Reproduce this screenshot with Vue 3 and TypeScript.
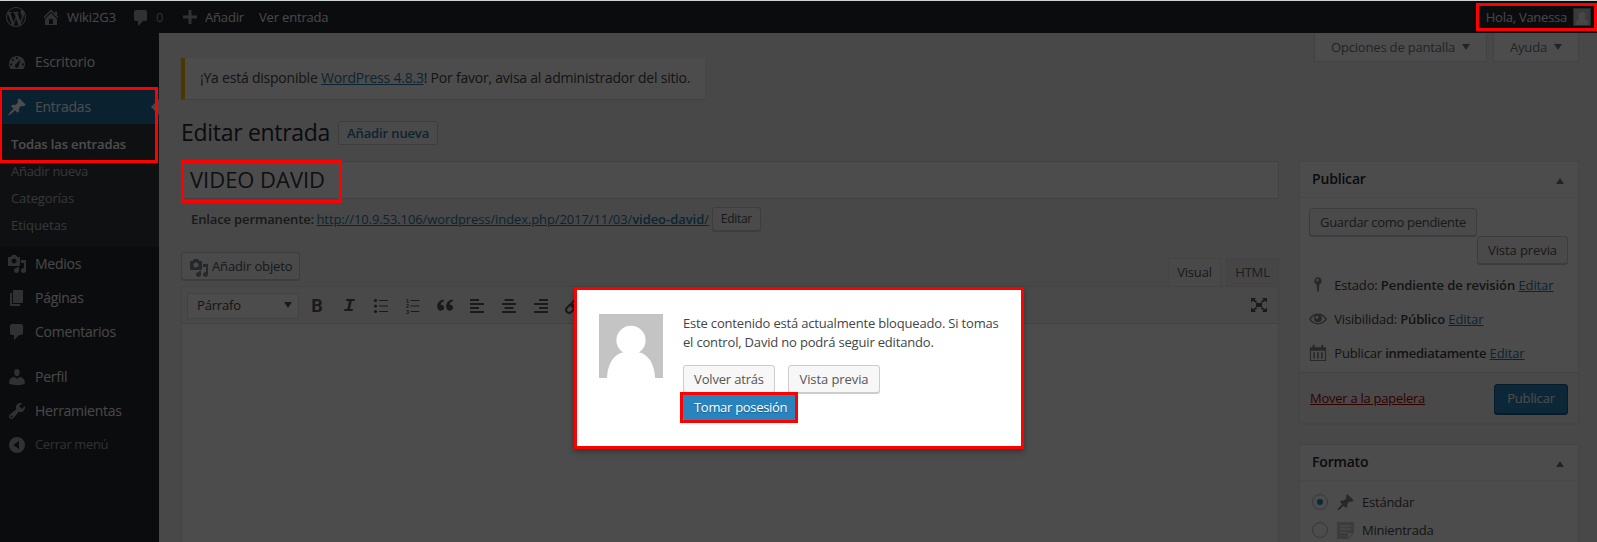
<script setup lang="ts">
interface MenuEntry {
  label: string
  icon: string
  cls?: string
}

const icons: Record<string, string> = {
  wordpress:
    'M20 10c0-5.51-4.49-10-10-10C4.48 0 0 4.49 0 10c0 5.52 4.48 10 10 10 5.51 0 10-4.48 10-10zM7.78 15.37L4.37 6.22c.55-.02 1.17-.08 1.17-.08.5-.06.44-1.13-.06-1.11 0 0-1.45.11-2.37.11-.18 0-.37 0-.58-.01C4.12 2.69 6.87 1.11 10 1.11c2.33 0 4.45.87 6.05 2.34-.68-.11-1.65.39-1.65 1.58 0 .74.45 1.36.9 2.1.35.61.55 1.36.55 2.46 0 1.49-1.4 5-1.4 5l-3.03-8.37c.54-.02.82-.17.82-.17.5-.05.44-1.25-.06-1.22 0 0-1.44.12-2.38.12-.87 0-2.33-.12-2.33-.12-.5-.03-.56 1.2-.06 1.22l.92.08 1.26 3.41zM17.41 10c.24-.64.74-1.87.43-4.25.7 1.29 1.05 2.71 1.05 4.25 0 3.29-1.73 6.24-4.4 7.78.97-2.59 1.94-5.2 2.92-7.78zM6.1 18.09C3.12 16.65 1.11 13.53 1.11 10c0-1.3.23-2.48.72-3.59C3.25 10.3 4.67 14.2 6.1 18.09zm4.03-6.63l2.58 6.98c-.86.29-1.76.45-2.71.45-.79 0-1.57-.11-2.29-.33.81-2.38 1.62-4.74 2.42-7.1z',
  home: 'M16 8.5l1.53 1.53-1.06 1.06L10 4.6l-6.47 6.49-1.06-1.06L10 2.5l4 4v-2h2v4zm-6-2.46l6 5.99V18H4v-5.97zM12 17v-5H8v5h4z',
  comment: 'M5 2h9c1.1 0 2 .9 2 2v7c0 1.1-.9 2-2 2h-2l-5 5v-5H5c-1.1 0-2-.9-2-2V4c0-1.1.9-2 2-2z',
  plus: 'M17 8.5v3h-5.5V17h-3v-5.5H3v-3h5.5V3h3v5.5z',
  dashboard:
    'M3.76 17h12.48C17.34 15.63 18 13.89 18 12c0-4.41-3.58-8-8-8s-8 3.59-8 8c0 1.89.66 3.63 1.76 5zM8.9 6.2a1.1 1.1 0 1 0 2.2 0 1.1 1.1 0 1 0-2.2 0zM4.8 8a1.1 1.1 0 1 0 2.2 0 1.1 1.1 0 1 0-2.2 0zM3 12.4a1.1 1.1 0 1 0 2.2 0 1.1 1.1 0 1 0-2.2 0zM14.8 12.4a1.1 1.1 0 1 0 2.2 0 1.1 1.1 0 1 0-2.2 0zM13.6 7.6l-1.9 6.3a1.9 1.9 0 1 1-3-1.6z',
  pin: 'M10.44 3.02l1.82-1.82 6.36 6.35-1.83 1.82c-1.05-.68-2.48-.57-3.41.36l-.75.75c-.92.93-1.04 2.35-.35 3.41l-1.83 1.82-2.41-2.41-2.8 2.79c-.42.42-3.38 2.71-3.8 2.29s1.86-3.39 2.28-3.81l2.79-2.79L4.1 9.36l1.83-1.82c1.05.69 2.48.57 3.4-.36l.75-.75c.93-.92 1.05-2.35.36-3.41z',
  media:
    'M13 11V4c0-.55-.45-1-1-1h-1.67L9 1H5L3.67 3H2c-.55 0-1 .45-1 1v7c0 .55.45 1 1 1h10c.55 0 1-.45 1-1zM7 4.5c1.38 0 2.5 1.12 2.5 2.5S8.38 9.5 7 9.5 4.5 8.38 4.5 7 5.62 4.5 7 4.5zM14 6h5v10.5c0 1.38-1.12 2.5-2.5 2.5S14 17.88 14 16.5s1.12-2.5 2.5-2.5c.17 0 .34.02.5.05V9h-3V6zm-4 8.05V13h2v3.5c0 1.38-1.12 2.5-2.5 2.5S7 17.88 7 16.5 8.12 14 9.5 14c.17 0 .34.02.5.05z',
  page: 'M6 15V2h10v13H6zm-1 1h8v2H3V5h2v11z',
  user: 'M10 9.25c-2.27 0-2.73-3.44-2.73-3.44C7 4.02 7.82 2 9.97 2c2.16 0 2.98 2.02 2.71 3.81 0 0-.41 3.44-2.68 3.44zm0 2.57L12.72 10c2.39 0 5.02 2.33 5.02 4.53v2.49s-4.15 1.13-7.74 1.13c-3.65 0-7.74-1.13-7.74-1.13v-2.49c0-2.25 2.44-4.48 4.97-4.48z',
  tools:
    'M16.68 9.77c-1.34 1.34-3.3 1.67-4.95.99l-5.41 6.52c-.99.99-2.59.99-3.58 0s-.99-2.59 0-3.57l6.52-5.42c-.68-1.65-.35-3.61.99-4.95 1.28-1.28 3.12-1.62 4.72-1.06l-2.89 2.89 2.82 2.82 2.86-2.87c.53 1.58.18 3.39-1.08 4.65zM3.81 16.21c.4.39 1.04.39 1.43 0 .4-.4.4-1.04 0-1.43-.39-.4-1.03-.4-1.43 0-.39.39-.39 1.03 0 1.43z',
  collapse: 'M10 2a8 8 0 1 0 0 16 8 8 0 0 0 0-16zM12 5.8v8.4L6.4 10z',
  marker:
    'M10 1.5a4 4 0 0 0-1.6 7.7l.8 8.3h1.6l.8-8.3A4 4 0 0 0 10 1.5zM9.3 3a1.4 1.4 0 1 1 0 2.8 1.4 1.4 0 0 1 0-2.8z',
  eye: 'M19.7 9.4C17.7 6 14 3.9 10 3.9S2.3 6 .3 9.4L0 10l.3.6c2 3.4 5.7 5.5 9.7 5.5s7.7-2.1 9.7-5.5l.3-.6zM10 14.6c-3.200 0-6.300-1.700-8-4.600C3.100 8.100 4.800 6.700 6.800 6 6 6.800 5.600 7.900 5.600 9.100a4.400 4.400 0 0 0 8.800 0c0-1.200-.4-2.300-1.200-3.100 2 .7 3.700 2.100 4.800 4-1.700 2.900-4.800 4.600-8 4.600zM8.900 6.300a1.700 1.700 0 1 1 0 3.400 1.700 1.700 0 0 1 0-3.400z',
  calendar:
    'M1 3.500h3V2a1.100 1.100 0 0 1 2.400 0v1.500h7.200V2a1.100 1.100 0 0 1 2.400 0v1.500h3V19H1zM2.300 7.500v10.200h15.400V7.500zM4.800 9.200h1.900v7H4.800zM9 9.200h1.900v7H9zM13.300 9.200h1.900v7h-1.900z',
  aside: 'M1 1h18v12l-6 6H1zM4 4.500v1.200h12V4.500zM4 8v1.200h12V8zM4 11.500v1.200h7v-1.200zM12.500 13v5l5-5z',
  quote:
    'M9 5.200c-2.400.6-3.300 2-3.300 3.500 1.800-.2 3.400.9 3.400 2.900 0 1.700-1.300 3.100-3.200 3.100-2.300 0-3.700-1.700-3.700-4.200C2.200 6.800 4.700 4 8.600 3.600zM18 5.200c-2.400.6-3.300 2-3.300 3.500 1.800-.2 3.400.9 3.400 2.900 0 1.700-1.300 3.100-3.200 3.100-2.300 0-3.700-1.700-3.700-4.200 0-3.700 2.500-6.500 6.400-6.900z',
  alignLeft: 'M3 3h9v2H3zM3 7h14v2H3zM3 11h9v2H3zM3 15h14v2H3z',
  alignCenter: 'M5.500 3h9v2h-9zM3 7h14v2H3zM5.500 11h9v2h-9zM3 15h14v2H3z',
  alignRight: 'M8 3h9v2H8zM3 7h14v2H3zM8 11h9v2H8zM3 15h14v2H3z',
  expand:
    'M2 3h5L5.500 4.400l2.700 2.300-1.300 1.400-2.800-2.400L2 7.500zM18 3h-5l1.500 1.400-2.700 2.300 1.300 1.400 2.800-2.400L18 7.500zM2 17h5l-1.500-1.400 2.700-2.300-1.300-1.400-2.800 2.400L2 12.500zM18 17h-5l1.500-1.400-2.700-2.300 1.300-1.400 2.800 2.400L18 12.500zM7 8h6v4H7z'
}

const submenu: MenuEntry[] = [
  { label: 'Todas las entradas', icon: '', cls: 'current' },
  { label: 'Añadir nueva', icon: '', cls: 'tight' },
  { label: 'Categorías', icon: '' },
  { label: 'Etiquetas', icon: '', cls: 'loose' }
]
const contentMenu: MenuEntry[] = [
  { label: 'Medios', icon: 'media' },
  { label: 'Páginas', icon: 'page' },
  { label: 'Comentarios', icon: 'comment' }
]
const userMenu: MenuEntry[] = [
  { label: 'Perfil', icon: 'user' },
  { label: 'Herramientas', icon: 'tools' },
  { label: 'Cerrar menú', icon: 'collapse', cls: 'collapse' }
]
const publishRows = [
  { icon: 'marker', label: 'Estado:', value: 'Pendiente de revisión', cls: 'state' },
  { icon: 'eye', label: 'Visibilidad:', value: 'Público', cls: 'visibility' },
  { icon: 'calendar', label: 'Publicar', value: 'inmediatamente', cls: 'date' }
]
</script>

<template>
  <div class="screen">
    <header class="adminbar">
      <svg class="ico wp" viewBox="0 0 20 20"><path :d="icons.wordpress" /></svg>
      <svg class="ico home" viewBox="0 0 20 20"><path fill-rule="evenodd" :d="icons.home" /></svg>
      <span class="site">Wiki2G3</span>
      <svg class="ico bubble" viewBox="0 0 20 20"><path :d="icons.comment" /></svg>
      <span class="count">0</span>
      <svg class="ico add" viewBox="0 0 20 20"><path :d="icons.plus" /></svg>
      <span class="new">Añadir</span>
      <span class="view">Ver entrada</span>
      <span class="hello">Hola, Vanessa</span>
      <svg class="me" viewBox="0 0 64 64">
        <rect width="64" height="64" fill="#c4c4c4" />
        <circle cx="32" cy="26" r="14" /><path d="M8 64c0-16 9-27 24-27s24 11 24 27z" />
      </svg>
    </header>

    <div class="body">
      <nav class="sidebar">
        <div class="item"><svg class="ico" viewBox="0 0 20 20"><path fill-rule="evenodd" :d="icons.dashboard" /></svg><span class="dash">Escritorio</span></div>
        <div class="item active gap"><svg class="ico" viewBox="0 0 20 20"><path :d="icons.pin" /></svg><span>Entradas</span></div>
        <div class="submenu">
          <span v-for="s in submenu" :key="s.label" :class="s.cls">{{ s.label }}</span>
        </div>
        <div v-for="m in contentMenu" :key="m.label" class="item">
          <svg class="ico" viewBox="0 0 20 20"><path fill-rule="evenodd" :d="icons[m.icon]" /></svg><span>{{ m.label }}</span>
        </div>
        <div class="gap">
          <div v-for="m in userMenu" :key="m.label" class="item" :class="m.cls">
            <svg class="ico" viewBox="0 0 20 20"><path fill-rule="evenodd" :d="icons[m.icon]" /></svg><span>{{ m.label }}</span>
          </div>
        </div>
      </nav>

      <main class="content">
        <div class="top">
          <div class="intro">
            <p class="notice">¡Ya está disponible <a>WordPress 4.8.3</a>! Por favor, avisa al administrador del sitio.</p>
            <div class="heading"><h1>Editar entrada</h1><a class="page-action">Añadir nueva</a></div>
          </div>
          <div class="meta-tabs">
            <span class="opts">Opciones de pantalla<i class="down" /></span>
            <span class="help">Ayuda<i class="down" /></span>
          </div>
        </div>

        <div class="columns">
          <section class="editor">
            <div class="title">VIDEO DAVID</div>
            <div class="permalink">
              <b>Enlace permanente:</b>
              <a><span>http://10.9.53.106/wordpress/index.php/2017/11/03/</span><b>video-david</b>/</a>
              <button class="btn small">Editar</button>
            </div>
            <div class="media-row">
              <button class="btn media"><svg class="ico" viewBox="0 0 20 20"><path fill-rule="evenodd" :d="icons.media" /></svg>Añadir objeto</button>
              <div class="tabs"><span class="tab on">Visual</span><span class="tab">HTML</span></div>
            </div>
            <div class="frame">
              <div class="toolbar">
                <div class="select">Párrafo<i class="down" /></div>
                <span class="tool bold">B</span>
                <span class="tool italic">I</span>
                <svg class="tool" viewBox="0 0 20 20">
                  <circle cx="4.500" cy="4.500" r="1.600" /><circle cx="4.500" cy="10" r="1.600" /><circle cx="4.500" cy="15.500" r="1.600" />
                  <path d="M8 4h9v1H8zM8 9.500h9v1H8zM8 15h9v1H8z" />
                </svg>
                <svg class="tool" viewBox="0 0 20 20">
                  <path d="M7.500 4h9v1h-9zM7.500 9.500h9v1h-9zM7.500 15h9v1h-9z" />
                  <text x="4.500" y="6.700" class="num">1</text><text x="4.500" y="12.200" class="num">2</text><text x="4.500" y="17.700" class="num">3</text>
                </svg>
                <svg class="tool" viewBox="0 0 20 20"><path :d="icons.quote" /></svg>
                <svg class="tool" viewBox="0 0 20 20"><path :d="icons.alignLeft" /></svg>
                <svg class="tool" viewBox="0 0 20 20"><path :d="icons.alignCenter" /></svg>
                <svg class="tool" viewBox="0 0 20 20"><path :d="icons.alignRight" /></svg>
                <svg class="tool link" viewBox="0 0 20 20">
                  <g transform="rotate(-45 10 10)"><rect x="1.500" y="7" width="9.500" height="6" rx="3" /><rect x="9" y="7" width="9.500" height="6" rx="3" /></g>
                </svg>
                <svg class="tool full" viewBox="0 0 20 20"><path :d="icons.expand" /></svg>
              </div>
              <div class="canvas" />
            </div>
          </section>

          <aside class="side">
            <section class="box">
              <h2>Publicar<i class="up" /></h2>
              <div class="publish">
                <button class="btn save">Guardar como pendiente</button>
                <button class="btn preview">Vista previa</button>
                <div v-for="r in publishRows" :key="r.label" class="row" :class="r.cls">
                  <svg class="ico" viewBox="0 0 20 20"><path fill-rule="evenodd" :d="icons[r.icon]" /></svg>
                  <span>{{ r.label }}</span><b>{{ r.value }}</b><a>Editar</a>
                </div>
              </div>
              <div class="actions"><a class="trash">Mover a la papelera</a><button class="btn primary">Publicar</button></div>
            </section>
            <section class="box format">
              <h2>Formato<i class="up" /></h2>
              <label class="choice"><i class="radio checked" /><svg class="ico" viewBox="0 0 20 20"><path :d="icons.pin" /></svg>Estándar</label>
              <label class="choice pale"><i class="radio" /><svg class="ico" viewBox="0 0 20 20"><path fill-rule="evenodd" :d="icons.aside" /></svg>Minientrada</label>
            </section>
          </aside>
        </div>
      </main>
    </div>

    <div class="shade" />

    <div class="dialog">
      <svg class="avatar" viewBox="0 0 64 64">
        <rect width="64" height="64" fill="#c4c4c4" />
        <circle cx="32" cy="26.300" r="14.600" /><path d="M8 64c.5-15 8-25.500 18.500-26h11C48 38.500 55.500 49 56 64z" />
      </svg>
      <div class="message">
        <p>Este contenido está actualmente bloqueado. Si tomas<br />el control, David no podrá seguir editando.</p>
        <div class="choices">
          <button class="btn back">Volver atrás</button>
          <button class="btn look">Vista previa</button>
          <button class="btn take">Tomar posesión</button>
        </div>
      </div>
    </div>

    <div class="mark mark-user" />
    <div class="mark mark-menu" />
    <div class="mark mark-title" />
    <div class="mark mark-take" />
  </div>
</template>

<style>
body {
  margin: 0;
  overflow: hidden;
}
</style>

<style scoped>
.screen {
  position: relative;
  box-sizing: border-box;
  width: 1597px;
  height: 542px;
  padding-top: 1px;
  overflow: hidden;
  background: #ccd3d3;
  color: #444;
  font: 13px/19px 'Open Sans', sans-serif;
  letter-spacing: -0.18px;
}
.screen *,
.screen *::before {
  box-sizing: border-box;
}
svg {
  display: block;
  flex: none;
  fill: currentColor;
}
.ico {
  width: 20px;
  height: 20px;
}
a {
  color: #2a79a8;
  text-decoration: underline;
}
b {
  font-weight: 600;
}
.adminbar {
  display: flex;
  align-items: center;
  height: 32px;
  padding-left: 6px;
  background: #23282d;
  color: #eee;
}
.adminbar .ico {
  color: #a0a5aa;
}
.home { margin: 0 6px 0 15px; }
.site { width: 66px; letter-spacing: -0.1px; }
.bubble { margin: 2px 5px 0 -2px; }
.count { width: 24px; color: #a0a5aa; }
.add { margin-right: 5px; }
.new { width: 54px; }
.hello { margin-left: auto; letter-spacing: -0.25px; }
.me {
  width: 18px;
  height: 18px;
  margin: 0 6px;
  border: 1px solid #82878c;
  fill: #eee;
}

.body {
  display: flex;
  height: 509px;
}
.sidebar {
  width: 159px;
  padding-top: 12px;
  background: #23282d;
  color: #eee;
  font-size: 14px;
  letter-spacing: -0.26px;
}
.item {
  display: flex;
  align-items: center;
  height: 34px;
  padding-left: 7px;
}
.item span { padding-bottom: 2px; }
.item .ico {
  margin-right: 8px;
  color: #a0a5aa;
}
.item .dash { letter-spacing: -0.15px; }
.gap { margin-top: 11px; }
.active {
  background: #246fa2;
  color: #fff;
}
.active .ico { color: #fff; }
.active::after {
  margin-left: auto;
  border: 8px solid transparent;
  border-right-color: #f1f1f1;
  border-left: 0;
  content: '';
}
.submenu {
  display: flex;
  flex-direction: column;
  height: 123px;
  padding: 7px 0 0 11px;
  background: #32373c;
  color: #b4b9be;
  font-size: 13px;
  line-height: 27px;
  letter-spacing: -0.12px;
}
.submenu .current { color: #fff; font-weight: 600; letter-spacing: -0.14px; }
.submenu .tight { letter-spacing: -0.28px; }
.submenu .loose { letter-spacing: -0.05px; }
.collapse { color: #a0a5aa; font-size: 13px; letter-spacing: -0.38px; }

.content {
  flex: 1;
  padding-left: 22px;
  background: #f1f1f1;
}
.top {
  display: flex;
  justify-content: space-between;
  height: 128px;
  padding-right: 18px;
}
.intro { padding-top: 25px; }
.notice {
  width: 524px;
  height: 41px;
  margin: 0;
  padding-left: 15px;
  border-left: 4px solid #ffb900;
  background: #fff;
  box-shadow: 0 1px 1px rgba(0, 0, 0, 0.1);
  font-size: 14px;
  line-height: 40px;
  letter-spacing: -0.22px;
  white-space: nowrap;
}
.heading {
  display: flex;
  align-items: center;
  gap: 8px;
  height: 67px;
}
h1 {
  margin: 0;
  color: #23282d;
  font-size: 23px;
  font-weight: 400;
  letter-spacing: -0.3px;
}
.page-action {
  height: 24px;
  padding: 0 8px;
  border: 1px solid #ccc;
  border-radius: 2px;
  background: #f7f7f7;
  font-weight: 600;
  line-height: 22px;
  letter-spacing: -0.13px;
  text-decoration: none;
}
.meta-tabs {
  display: flex;
  align-items: flex-start;
  gap: 6px;
  color: #72777c;
  line-height: 28px;
}
.meta-tabs > span {
  display: flex;
  align-items: center;
  height: 29px;
  padding-left: 16px;
  border: 1px solid #ddd;
  border-top: 0;
  background: #fff;
}
.meta-tabs .opts { width: 173px; }
.meta-tabs .help { width: 86px; }
.down {
  margin: -1px 0 0 7px;
  border: 4px solid transparent;
  border-top: 6px solid #72777c;
  border-bottom: 0;
}
.columns {
  display: grid;
  grid-template-columns: 1098px 280px;
  gap: 20px;
}
.title {
  height: 38px;
  padding-left: 8px;
  border: 1px solid #ddd;
  background: #fff;
  color: #32373c;
  font-size: 22px;
  line-height: 35px;
  letter-spacing: -0.03px;
}
.permalink {
  display: flex;
  align-items: center;
  height: 42px;
  padding: 0 0 2px 10px;
}
.permalink > b { width: 125px; color: #555; letter-spacing: -0.13px; white-space: nowrap; }
.permalink a { margin-left: 0.5px; letter-spacing: -0.1px; }
.permalink a b { letter-spacing: -0.05px; }
.btn {
  height: 28px;
  padding: 1px 10px 0;
  border: 1px solid #ccc;
  border-radius: 3px;
  background: #f7f7f7;
  box-shadow: 0 1px 0 #ccc;
  color: #555;
  font: inherit;
  letter-spacing: inherit;
  white-space: nowrap;
}
.small {
  height: 24px;
  margin-left: 3px;
  padding: 0 8px;
  font-size: 12px;
  line-height: 22px;
  letter-spacing: -0.3px;
}
.media-row {
  display: flex;
  align-items: flex-start;
  justify-content: space-between;
  height: 45px;
  padding-top: 11px;
}
.media {
  display: flex;
  align-items: center;
  width: 119px;
  padding: 0 0 0 7px;
  letter-spacing: -0.13px;
}
.media .ico { margin: 3px 3px 0 0; color: #82878c; }
.tabs {
  display: flex;
  gap: 5px;
  padding-top: 6px;
}
.tab {
  width: 53px;
  height: 28px;
  border: 1px solid #e5e5e5;
  border-bottom: 0;
  background: #ebebeb;
  color: #666;
  line-height: 27px;
  text-align: center;
}
.tab.on {
  background: #f5f5f5;
  color: #555;
}
.frame {
  height: 270px;
  border: 1px solid #e5e5e5;
}
.toolbar {
  display: flex;
  align-items: center;
  height: 37px;
  padding-left: 5px;
  border-bottom: 1px solid #ddd;
  background: #f5f5f5;
  color: #50575e;
}
.select {
  display: flex;
  align-items: center;
  justify-content: space-between;
  width: 112px;
  height: 26px;
  margin: 1px 2px 0 0;
  padding: 0 6px 1px 9px;
  border: 1px solid #ddd;
  background: #fff;
  color: #444;
}
.select .down { border-top-color: #50575e; }
.tool {
  width: 20px;
  height: 20px;
  margin: 1px 6px 0;
}
.bold {
  font: 700 18px/20px Roboto, sans-serif;
  text-align: center;
}
.italic {
  font: italic 700 19px/20px 'Liberation Mono', monospace;
  text-align: center;
}
.num {
  font: 700 5.500px 'Liberation Sans', sans-serif;
  letter-spacing: 0;
  text-anchor: middle;
}
.link { fill: none; stroke: currentColor; stroke-width: 2; }
.full { margin: 0 9px 0 auto; }
.canvas { height: 232px; background: #fff; }

.box {
  border: 1px solid #e5e5e5;
  background: #fff;
  box-shadow: 0 1px 1px rgba(0, 0, 0, 0.04);
}
h2 {
  display: flex;
  align-items: center;
  justify-content: space-between;
  height: 36px;
  margin: 0;
  padding: 0 14px 3px 12px;
  border-bottom: 1px solid #eee;
  color: #23282d;
  font-size: 14px;
  font-weight: 600;
}
.up {
  margin-top: 6px;
  border: 4px solid transparent;
  border-top: 0;
  border-bottom: 6px solid #72777c;
}
.publish {
  display: flex;
  flex-direction: column;
  height: 174px;
  padding: 10px 10px 0 9px;
}
.save { align-self: flex-start; flex: none; width: 168px; letter-spacing: -0.31px; }
.preview { align-self: flex-end; flex: none; width: 91px; margin-bottom: 4px; letter-spacing: -0.09px; }
.row {
  display: flex;
  align-items: center;
  gap: 3.3px;
  height: 34px;
  white-space: nowrap;
}
.row .ico { width: 18px; height: 18px; margin-right: 4px; color: #82878c; }
.row b { color: #444; }
.row a { letter-spacing: -0.1px; }
.state b { letter-spacing: -0.08px; }
.date b { letter-spacing: -0.25px; }
.actions {
  display: flex;
  align-items: center;
  justify-content: space-between;
  height: 51px;
  padding: 0 10px 0 10px;
  border-top: 1px solid #ddd;
  background: #f5f5f5;
}
.trash { color: #a00; letter-spacing: -0.26px; }
.primary {
  width: 74px;
  height: 30px;
  margin-top: 1px;
  padding: 0;
  border-color: #1a5f8e;
  background: #2983bd;
  box-shadow: 0 1px 0 #1a5f8e;
  color: #fff;
}
.format { height: 110px; margin-top: 20px; }
.choice {
  display: flex;
  align-items: center;
  height: 28px;
  padding-left: 12px;
  letter-spacing: -0.22px;
}
h2 + .choice { margin-top: 7px; }
.choice .ico { width: 19px; height: 19px; margin: 0 7px 0 8px; color: #82878c; }
.pale .ico { color: #c8c8c8; }
.radio {
  display: flex;
  align-items: center;
  justify-content: center;
  width: 16px;
  height: 16px;
  border: 1px solid #b4b9be;
  border-radius: 50%;
}
.checked::before {
  width: 6px;
  height: 6px;
  border-radius: 50%;
  background: #1e8cbe;
  content: '';
}

.shade {
  position: absolute;
  inset: 1px 0 0;
  background: rgba(0, 0, 0, 0.7);
}
.dialog {
  position: absolute;
  top: 287px;
  left: 574px;
  display: flex;
  gap: 20px;
  width: 450px;
  height: 162px;
  padding: 24px 0 0 22px;
  border: 3px solid #f00;
  background: #fff;
  box-shadow: 0 3px 6px rgba(0, 0, 0, 0.3);
}
.avatar { width: 64px; height: 64px; fill: #fff; }
.message p { margin: 0 0 13px; white-space: nowrap; }
.choices {
  display: flex;
  flex-wrap: wrap;
  column-gap: 13px;
  width: 320px;
}
.back, .look { width: 92px; }
.look { letter-spacing: -0.09px; }
.take {
  width: 114px;
  height: 28px;
  border-color: #2983bd;
  background: #2983bd;
  color: #fff;
  letter-spacing: -0.3px;
  text-shadow: 0 1px 1px #1a5f8e;
}
.mark {
  position: absolute;
  border: 3px solid #f00;
}
.mark-user { top: 3px; left: 1476px; width: 121px; height: 28px; }
.mark-menu { top: 87px; left: -1px; width: 159px; height: 76px; }
.mark-title { top: 160px; left: 181px; width: 161px; height: 43px; }
.mark-take { top: 392px; left: 680px; width: 118px; height: 31px; }
</style>
